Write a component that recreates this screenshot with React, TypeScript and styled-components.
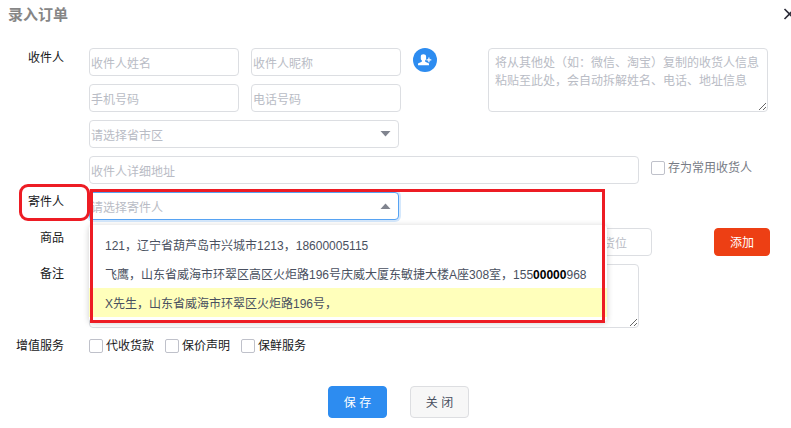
import React from 'react';
import styled, { createGlobalStyle, css } from 'styled-components';

const GlobalStyle = createGlobalStyle`
  * { box-sizing: border-box; }
  body {
    margin: 0;
    background: #fff;
    color: #17181a;
    font-family: "Liberation Sans", "Noto Sans CJK SC", sans-serif;
    font-size: 12px;
    line-height: 18px;
    overflow: hidden;
  }
  button, input, select, textarea { font: inherit; margin: 0; }
`;

const Dialog = styled.main`
  display: flex;
  flex-direction: column;
`;

const Header = styled.header`
  display: flex;
  justify-content: space-between;
  align-items: center;
  height: 28px;
  margin-right: -4px;
  padding-left: 8px;
`;

const Title = styled.h1`
  margin: 0;
  padding-top: 2px;
  font-size: 15px;
  line-height: 28px;
  font-weight: 700;
  color: #868686;
`;

const CloseIconButton = styled.button`
  display: flex;
  padding: 0;
  border: 0;
  background: none;
  color: #2c2c38;
`;

const Form = styled.form`
  display: flex;
  flex-direction: column;
  gap: 8px;
  padding-top: 20px;
`;

const Row = styled.div`
  display: grid;
  grid-template-columns: 64px minmax(0, 1fr);
  column-gap: 25px;
  align-items: start;
`;

const RowLabel = styled.label`
  position: relative;
  line-height: 20px;
  text-align: right;
`;

const RowTitle = styled.span`
  line-height: 20px;
  text-align: right;
`;

const Stack = styled.div`
  display: flex;
  flex-direction: column;
  gap: 8px;
`;

const Line = styled.div<{ $gap?: number }>`
  display: flex;
  align-items: flex-start;
  gap: ${({ $gap = 12 }) => $gap}px;
`;

const Recipient = styled.div`
  display: flex;
  align-items: flex-start;
  gap: 51px;
`;

const frame = css`
  border: 1px solid #dcdee2;
  border-radius: 4px;
  background: #fff;
  outline: none;
  &::placeholder { color: #b9bcc5; opacity: 1; }
`;

const TextInput = styled.input<{ $width: number }>`
  ${frame}
  flex: 0 1 ${({ $width }) => $width}px;
  width: ${({ $width }) => $width}px;
  min-width: 0;
  height: 28px;
  padding: 4px 1px 0;
`;

const TextArea = styled.textarea<{ $width: number }>`
  ${frame}
  display: block;
  width: ${({ $width }) => $width}px;
  height: 64px;
  padding: 5px 6px;
`;

const SelectBox = styled.div`
  position: relative;
  width: 310px;
`;

const Select = styled.select<{ $open?: boolean }>`
  ${frame}
  display: block;
  appearance: none;
  width: 100%;
  height: 28px;
  padding: 3px 24px 0 1px;
  color: #b9bcc5;
  ${({ $open }) => $open && css`
    border-color: #57a3f3;
    box-shadow: 0 0 0 2px rgba(45, 140, 240, 0.2);
  `}
`;

const Caret = styled.svg<{ $up?: boolean }>`
  position: absolute;
  right: 8px;
  top: 11px;
  pointer-events: none;
  transform: ${({ $up }) => ($up ? 'rotate(180deg)' : 'none')};
`;

const Menu = styled.ul`
  position: absolute;
  z-index: 2;
  top: 33px;
  left: 0;
  min-width: 518px;
  margin: 0;
  padding: 5px 0;
  list-style: none;
  background: #fff;
  border-radius: 4px;
  box-shadow: 0 1px 6px rgba(0, 0, 0, 0.2);
`;

const MenuItem = styled.li<{ $active?: boolean }>`
  height: 29px;
  padding: 0 16px;
  line-height: 32px;
  white-space: nowrap;
  color: #495060;
  background: ${({ $active }) => ($active ? '#ffffbb' : 'transparent')};
`;

const Strong = styled.b`
  color: #000;
`;

const MenuMark = styled.div`
  position: absolute;
  z-index: 3;
  top: -3px;
  left: 1px;
  width: 515px;
  height: 134px;
  border: 3px solid #ed1c24;
  pointer-events: none;
`;

const LabelMark = styled.span`
  position: absolute;
  z-index: 3;
  top: -8px;
  left: 19px;
  width: 71px;
  height: 37px;
  border: 3px solid #ed1c24;
  border-radius: 9px;
  pointer-events: none;
`;

const RoundButton = styled.button`
  display: flex;
  flex: none;
  justify-content: center;
  align-items: center;
  width: 24px;
  height: 24px;
  padding: 0;
  border: 0;
  border-radius: 50%;
  background: #2d8cf0;
  color: #fff;
`;

const CheckLabel = styled.label<{ $muted?: boolean }>`
  display: flex;
  align-items: center;
  gap: 3px;
  height: ${({ $muted }) => ($muted ? 24 : 20)}px;
  white-space: nowrap;
  color: ${({ $muted }) => ($muted ? '#777b85' : 'inherit')};
`;

const Checkbox = styled.input`
  appearance: none;
  width: 14px;
  height: 14px;
  border: 1px solid #bfc1ca;
  border-radius: 2px;
  background: #fff;
  &:checked { background: #2d8cf0; }
`;

const Button = styled.button<{ $kind: 'add' | 'save' | 'close' }>`
  width: ${({ $kind }) => ($kind === 'add' ? 56 : 59)}px;
  height: ${({ $kind }) => ($kind === 'add' ? 28 : 32)}px;
  padding: 2px 0 0;
  border: 1px solid ${({ $kind }) => ({ add: '#ed3f14', save: '#2d8cf0', close: '#dddee1' })[$kind]};
  border-radius: 4px;
  background: ${({ $kind }) => ({ add: '#ed3f14', save: '#2d8cf0', close: '#f7f7f7' })[$kind]};
  color: ${({ $kind }) => ($kind === 'close' ? '#495060' : '#fff')};
`;

const Goods = styled.div`
  display: flex;
  flex: 0 1 563px;
  min-width: 0;
  gap: 12px;
`;

const GoodsLine = styled.div`
  display: flex;
  gap: 62px;
`;

const Footer = styled.footer`
  display: flex;
  justify-content: center;
  gap: 23px;
  padding: 22px 0 10px 6px;
`;

const DownCaret = ({ up }: { up?: boolean }) => (
  <Caret $up={up} width="11" height="6" viewBox="0 0 11 6" aria-hidden="true">
    <path d="M0.5 0h10L5.5 5.6z" fill="#80848f" />
  </Caret>
);

const services = ['代收货款', '保价声明', '保鲜服务'];

export default function App() {
  return (
    <Dialog>
      <GlobalStyle />
      <Header>
        <Title>录入订单</Title>
        <CloseIconButton type="button" aria-label="关闭">
          <svg width="12" height="12" viewBox="0 0 12 12" fill="none" stroke="currentColor" strokeWidth="1.6">
            <path d="M1.5 1l10 10M11.5 1l-10 10" />
          </svg>
        </CloseIconButton>
      </Header>

      <Form onSubmit={(e) => e.preventDefault()}>
        <Row>
          <RowLabel htmlFor="name">收件人</RowLabel>
          <Stack>
            <Recipient>
              <Stack>
                <Line>
                  <TextInput id="name" $width={150} placeholder="收件人姓名" />
                  <TextInput $width={150} placeholder="收件人昵称" aria-label="收件人昵称" />
                  <RoundButton type="button" aria-label="收件人">
                    <svg width="14" height="12" viewBox="0 0 14 12" fill="currentColor" aria-hidden="true">
                      <path d="M2.8 2.6C2.8 1 3.8 0.3 5.4 0.3S8.1 1 8.1 2.6V4.4C8.1 5.4 7.6 5.8 7.2 6.3V7.7L10.6 9.2Q11 9.4 11 9.9V11.3H0V9.9Q0 9.4 0.4 9.2L3.8 7.7V6.3C3.3 5.8 2.8 5.4 2.8 4.4Z" />
                      <path d="M10.3 3.5h1.2v1.8h1.8v1.2h-1.8v1.8h-1.2V6.5H8.5V5.3h1.8z" />
                    </svg>
                  </RoundButton>
                </Line>
                <Line>
                  <TextInput $width={150} placeholder="手机号码" aria-label="手机号码" />
                  <TextInput $width={150} placeholder="电话号码" aria-label="电话号码" />
                </Line>
              </Stack>
              <TextArea
                $width={280}
                aria-label="收货人信息"
                placeholder="将从其他处（如：微信、淘宝）复制的收货人信息粘贴至此处，会自动拆解姓名、电话、地址信息"
              />
            </Recipient>
            <SelectBox>
              <Select aria-label="省市区" defaultValue="">
                <option value="">请选择省市区</option>
              </Select>
              <DownCaret />
            </SelectBox>
            <Line>
              <TextInput $width={550} placeholder="收件人详细地址" aria-label="收件人详细地址" />
              <CheckLabel $muted>
                <Checkbox type="checkbox" />
                存为常用收货人
              </CheckLabel>
            </Line>
          </Stack>
        </Row>

        <Row>
          <RowLabel htmlFor="sender">
            寄件人
            <LabelMark />
          </RowLabel>
          <SelectBox>
            <Select id="sender" $open defaultValue="">
              <option value="">请选择寄件人</option>
            </Select>
            <DownCaret up />
            <Menu role="listbox" aria-label="寄件人">
              <MenuItem role="option">121，辽宁省葫芦岛市兴城市1213，18600005115</MenuItem>
              <MenuItem role="option">
                飞鹰，山东省威海市环翠区高区火炬路196号庆威大厦东敏捷大楼A座308室，155<Strong>00000</Strong>968
              </MenuItem>
              <MenuItem role="option" aria-selected="true" $active>
                X先生，山东省威海市环翠区火炬路196号，
              </MenuItem>
            </Menu>
            <MenuMark />
          </SelectBox>
        </Row>

        <Row>
          <RowLabel htmlFor="goods">商品</RowLabel>
          <GoodsLine>
            <Goods>
              <TextInput id="goods" $width={500} />
              <TextInput $width={51} placeholder="货位" aria-label="货位" />
            </Goods>
            <Button type="button" $kind="add">添加</Button>
          </GoodsLine>
        </Row>

        <Row>
          <RowLabel htmlFor="remark">备注</RowLabel>
          <TextArea id="remark" $width={550} />
        </Row>

        <Row>
          <RowTitle>增值服务</RowTitle>
          <Line $gap={11}>
            {services.map((name) => (
              <CheckLabel key={name}>
                <Checkbox type="checkbox" />
                {name}
              </CheckLabel>
            ))}
          </Line>
        </Row>

        <Footer>
          <Button type="submit" $kind="save">保 存</Button>
          <Button type="button" $kind="close">关 闭</Button>
        </Footer>
      </Form>
    </Dialog>
  );
}
